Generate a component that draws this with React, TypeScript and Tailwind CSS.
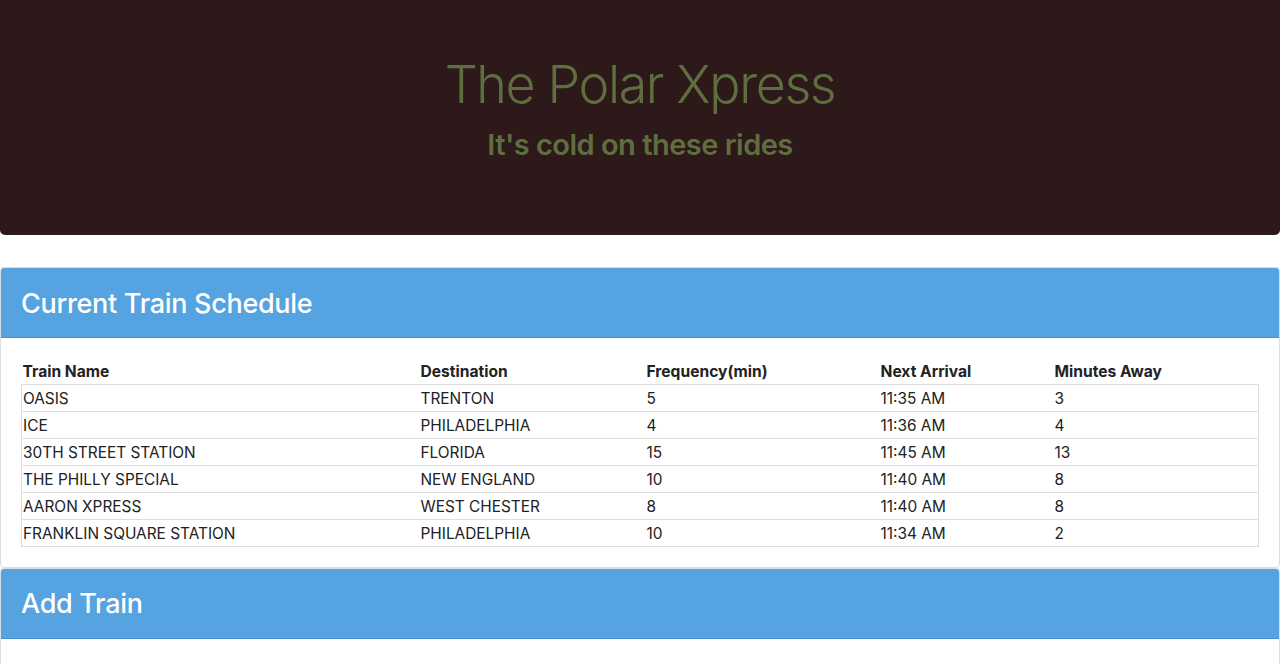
import React from "react";

const rows = [
  ["OASIS", "TRENTON", "5", "11:35 AM", "3"],
  ["ICE", "PHILADELPHIA", "4", "11:36 AM", "4"],
  ["30TH STREET STATION", "FLORIDA", "15", "11:45 AM", "13"],
  ["THE PHILLY SPECIAL", "NEW ENGLAND", "10", "11:40 AM", "8"],
  ["AARON XPRESS", "WEST CHESTER", "8", "11:40 AM", "8"],
  ["FRANKLIN SQUARE STATION", "PHILADELPHIA", "10", "11:34 AM", "2"],
];

const headers = ["Train Name", "Destination", "Frequency(min)", "Next Arrival", "Minutes Away"];
const widths = ["w-[398px]", "w-[226px]", "w-[234px]", "w-[174px]", ""];

export default function App() {
  return (
    <div className="min-h-[664px] bg-white font-['Inter','Liberation_Sans',sans-serif] text-[#222]">
      <div className="h-[235px] bg-[#2d191a] rounded-b-[5px] flex flex-col items-center pt-[54px]">
        <h1 className="text-[52px] leading-[62px] font-light text-[#5f6e3f] tracking-[-1.4px]">The Polar Xpress</h1>
        <h2 className="text-[29px] leading-[36px] font-semibold text-[#5f6e3f] mt-[11px] tracking-[-0.5px]">It's cold on these rides</h2>
      </div>

      <div className="mt-[32px] border border-[#dddddd] rounded-[4px] overflow-hidden">
        <div className="h-[70px] bg-[#55a3e0] border-b border-[#4a8fcc] flex items-center px-[20px] pt-[3px]">
          <h3 className="text-[27px] font-medium text-white tracking-[-0.3px]">Current Train Schedule</h3>
        </div>
        <div className="px-[20px] pt-[21px] pb-[20px]">
          <table className="w-full border-collapse text-[15.4px]">
            <thead>
              <tr className="h-[25px]">
                {headers.map((h, i) => (
                  <th key={h} className={`${widths[i]} text-left text-[15.6px] font-bold pl-[1px] pr-[2px] pt-[2px] leading-[20px] align-middle`}>{h}</th>
                ))}
              </tr>
            </thead>
            <tbody className="border border-[#dddddd]">
              {rows.map((r) => (
                <tr key={r[0]} className="h-[27px] border-t border-[#dddddd]">
                  {r.map((c, i) => (
                    <td key={i} className={`${widths[i]} pl-[1px] pr-[2px] pt-[2px] leading-[20px] align-middle`}>{c}</td>
                  ))}
                </tr>
              ))}
            </tbody>
          </table>
        </div>
      </div>

      <div className="border border-[#dddddd] rounded-[4px] overflow-hidden h-[120px]">
        <div className="h-[70px] bg-[#55a3e0] border-b border-[#4a8fcc] flex items-center px-[20px] pt-[3px]">
          <h3 className="text-[27px] font-medium text-white tracking-[-0.3px]">Add Train</h3>
        </div>
      </div>
    </div>
  );
}
